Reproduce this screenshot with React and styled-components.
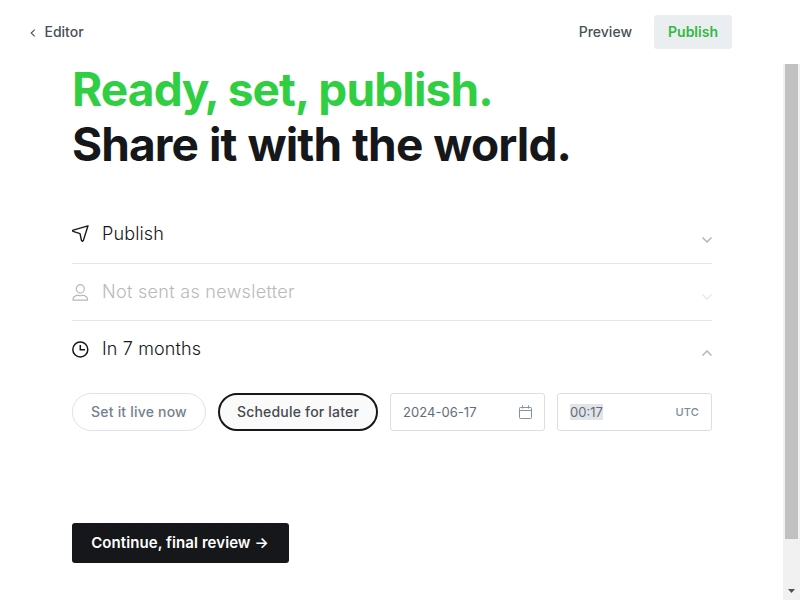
import React from 'react';
import styled, { createGlobalStyle } from 'styled-components';

const GlobalStyle = createGlobalStyle`
  * { box-sizing: border-box; }
  body { margin: 0; background: #fff; color: #15171a; font-family: Inter, sans-serif; overflow: hidden; }
  button { font-family: inherit; cursor: pointer; padding: 0; margin: 0; border: 0; background: none; }
`;

const Page = styled.div`
  display: flex;
  flex-direction: column;
  height: 600px;
  width: 800px;
`;
const Header = styled.header`
  display: flex;
  align-items: center;
  justify-content: space-between;
  height: 64px;
  padding: 0 68px 0 30px;
`;
const BackLink = styled.button`
  display: flex;
  align-items: center;
  gap: 8.5px;
  font-size: 14px;
  line-height: 20px;
  font-weight: 500;
  color: #495057;
  svg { margin-top: 2px; }
`;
const Actions = styled.div`
  display: flex;
  align-items: center;
  gap: 22px;
`;
const PreviewButton = styled.button`
  font-size: 14px;
  font-weight: 500;
  line-height: 20px;
  color: #495057;
`;
const PublishButton = styled.button`
  width: 78px;
  height: 34px;
  padding-bottom: 1px;
  border-radius: 3px;
  background: #ebeef0;
  color: #30b940;
  font-size: 14px;
  font-weight: 600;
`;
const Body = styled.div`
  display: flex;
  flex: 1;
`;
const Main = styled.main`
  flex: 1;
  padding: 0 71px 0 72px;
`;
const Title = styled.h1`
  margin: -2px 0 0;
  font-size: 46px;
  line-height: 55px;
  font-weight: 700;
  letter-spacing: -0.87px;
  word-spacing: 0.86px;
  white-space: nowrap;
`;
const Accent = styled.span`
  display: block;
  letter-spacing: -0.85px;
  word-spacing: 0;
  color: #30cf43;
`;
const Kern = styled.span`
  letter-spacing: -5px;
`;
const Settings = styled.section`
  margin-top: 32px;
`;
const Row = styled.div`
  display: flex;
  align-items: center;
  height: ${p => p.$height || 57}px;
  border-bottom: ${p => (p.$last ? '0' : '1px solid #e1e6ea')};
`;
const RowIcon = styled.span`
  display: flex;
  width: 30px;
  color: ${p => (p.$muted ? '#b9b9ba' : '#15171a')};
`;
const RowLabel = styled.span`
  flex: 1;
  font-size: 18px;
  font-weight: 300;
  line-height: 24px;
  letter-spacing: ${p => (p.$muted ? 0.3 : 0.13)}px;
  color: ${p => (p.$muted ? '#b9b9ba' : '#15171a')};
`;
const RowArrow = styled.span`
  display: flex;
  margin-top: ${p => p.$shift || 10}px;
  opacity: ${p => (p.$muted ? 0.3 : 1)};
`;
const Schedule = styled.div`
  display: flex;
  gap: 12px;
  margin-top: 16px;
`;
const Pill = styled.button`
  width: ${p => p.$width}px;
  height: 38px;
  padding-bottom: 1px;
  border-radius: 19px;
  border: ${p => (p.$active ? '2px solid #15171a' : '1px solid #dde3e8')};
  background: ${p => (p.$active ? '#fafafa' : '#fff')};
  color: ${p => (p.$active ? '#464a4e' : '#74808d')};
  font-size: 14px;
  font-weight: 500;
  letter-spacing: 0.2px;
`;
const Field = styled.div`
  display: flex;
  align-items: center;
  justify-content: space-between;
  width: 155px;
  height: 38px;
  padding: 0 12px;
  border: 1px solid #dddedf;
  border-radius: 3px;
  font-size: 13px;
  letter-spacing: 0.05px;
  color: #626d79;
`;
const Selected = styled.span`
  line-height: 16px;
  letter-spacing: 0;
  background: #e1e5e7;
`;
const Zone = styled.span`
  font-size: 11px;
  font-weight: 500;
  letter-spacing: 0.15px;
  color: #7c8b9a;
`;
const Continue = styled.button`
  width: 217px;
  height: 40px;
  margin-top: 92px;
  padding: 0 1px 1px 0;
  border-radius: 3px;
  background: #15171a;
  color: #fff;
  font-size: 15px;
  font-weight: 600;
  letter-spacing: 0.08px;
`;
const Scrollbar = styled.div`
  display: flex;
  flex-direction: column;
  align-items: center;
  justify-content: space-between;
  width: 17px;
  padding-bottom: 7px;
  background: #f1f1f1;
`;
const Thumb = styled.div`
  width: 13px;
  height: 475px;
  background: #c1c1c1;
`;

const Chevron = ({ up }) => (
  <svg width="10" height="6" viewBox="0 0 10 6" fill="none" stroke="#aeb7c1" strokeWidth="1.5">
    <path d={up ? 'M.5 5.5 5 1l4.5 4.5' : 'M.5.5 5 5 9.5.5'} />
  </svg>
);
const SendIcon = () => (
  <svg width="17" height="17" viewBox="0 0 17 17" fill="none" stroke="currentColor" strokeWidth="1.4" strokeLinejoin="round">
    <path d="M16 .8 1.2 5.1c-.7.2-.8 1-.2 1.3l7 2.3 1.5 6.9c.3.8 1.5.8 1.8 0L16 .8Z" />
  </svg>
);
const PersonIcon = () => (
  <svg width="17" height="17" viewBox="0 0 17 17" fill="none" stroke="currentColor" strokeWidth="1.2">
    <ellipse cx="8.3" cy="4.9" rx="4" ry="4.3" />
    <path d="M1 16.2c0-3.1 2-4.5 5-5q2.3 1.1 4.6 0c3 .5 5 1.9 5 5Z" strokeLinejoin="round" />
  </svg>
);
const ClockIcon = () => (
  <svg width="17" height="17" viewBox="0 0 17 17" fill="none" stroke="currentColor" strokeWidth="1.5">
    <circle cx="8.3" cy="8.5" r="7.5" />
    <path d="M8.3 4v4.7H13" />
  </svg>
);
const CalendarIcon = () => (
  <svg width="13" height="14" viewBox="0 0 13 14" fill="none" stroke="#8594a3" strokeWidth="1">
    <rect x=".5" y="2.5" width="12" height="11" rx=".8" />
    <path d="M.5 5.5h12M3.5 .3v3.2M9.5 .3v3.2" />
  </svg>
);

export default function App() {
  return (
    <Page>
      <GlobalStyle />
      <Header>
        <BackLink>
          <svg width="6" height="8" viewBox="0 0 6 8" fill="none" stroke="currentColor" strokeWidth="1.1">
            <path d="M4.7.7 1.2 4l3.5 3.3" />
          </svg>
          Editor
        </BackLink>
        <Actions>
          <PreviewButton>Preview</PreviewButton>
          <PublishButton>Publish</PublishButton>
        </Actions>
      </Header>
      <Body>
        <Main>
          <Title><Accent>Read<Kern>y</Kern>, set, publish.</Accent>Share it with the world.</Title>
          <Settings>
            <Row $height={60}>
              <RowIcon><SendIcon /></RowIcon>
              <RowLabel>Publish</RowLabel>
              <RowArrow $shift={12}><Chevron /></RowArrow>
            </Row>
            <Row>
              <RowIcon $muted><PersonIcon /></RowIcon>
              <RowLabel $muted>Not sent as newsletter</RowLabel>
              <RowArrow $muted><Chevron /></RowArrow>
            </Row>
            <Row $last $height={56}>
              <RowIcon><ClockIcon /></RowIcon>
              <RowLabel>In 7 months</RowLabel>
              <RowArrow $shift={8}><Chevron up /></RowArrow>
            </Row>
          </Settings>
          <Schedule>
            <Pill $width={134}>Set it live now</Pill>
            <Pill $width={160} $active>Schedule for later</Pill>
            <Field>2024-06-17<CalendarIcon /></Field>
            <Field><Selected>00:17</Selected><Zone>UTC</Zone></Field>
          </Schedule>
          <Continue>Continue, final review →</Continue>
        </Main>
        <Scrollbar>
          <Thumb />
          <svg width="7" height="4" viewBox="0 0 7 4" fill="#505050"><path d="M0 0h7L3.5 4Z" /></svg>
        </Scrollbar>
      </Body>
    </Page>
  );
}
